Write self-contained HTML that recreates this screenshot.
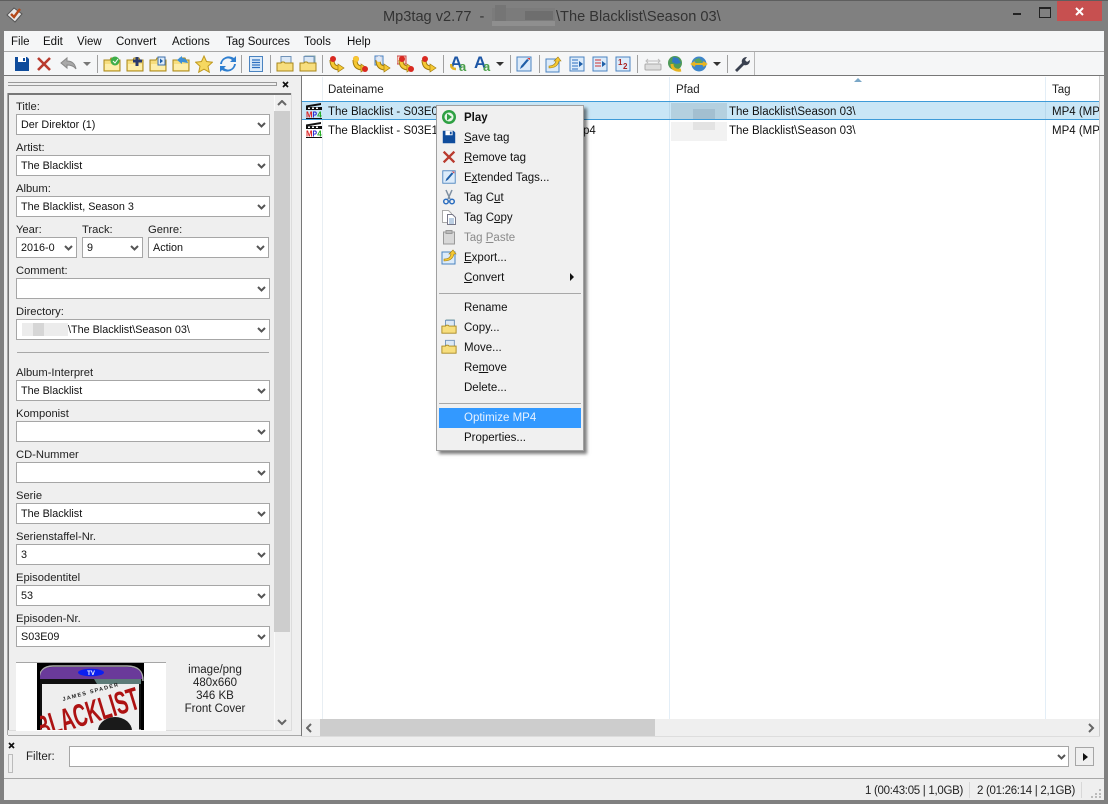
<!DOCTYPE html>
<html><head><meta charset="utf-8"><style>
html,body{margin:0;padding:0;width:1108px;height:804px;overflow:hidden;background:#808080}
body{position:relative;font:11.5px/16px "Liberation Sans",sans-serif;color:#111}
div,span.a,svg.a{position:absolute}
.t{white-space:nowrap}
.m{top:34px;white-space:nowrap;color:#111}
.l{left:16px;white-space:nowrap;color:#222;margin-top:1px;font-size:11.200px}
.c{box-sizing:border-box;background:#fff;border:1px solid #a6a6a6;height:21px;white-space:nowrap;padding:2px 0 0 4px;font-size:10.800px}
.c svg{position:absolute;right:3px;top:7px}
.s{width:1px;height:18px;top:55px;background:#a0a0a0}
.i{top:55px;width:18px;height:18px}
.mi{left:464px;white-space:nowrap;color:#111}
.mic{left:441px;width:16px;height:16px}
u{text-underline-offset:1px}
.b{background:#b9b9b9}
</style></head><body>
<svg width="0" height="0" style="position:absolute"><defs>
<symbol id="ch" viewBox="0 0 9 6"><path d="M1 1l3.500 3.500L8 1" fill="none" stroke="#555" stroke-width="2"/></symbol>
<symbol id="save" viewBox="0 0 18 18"><path d="M2 2h12l2 2v12H2z" fill="#0f4c9c"/><rect x="5" y="2" width="8" height="5" fill="#fff"/><rect x="10" y="3" width="2" height="3" fill="#0f4c9c"/></symbol>
<symbol id="x" viewBox="0 0 18 18"><path d="M3 3l12 12M15 3L3 15" stroke="#b93a2e" stroke-width="2.600" fill="none"/></symbol>
<symbol id="fold" viewBox="0 0 18 18"><path d="M1 5h6l1-2h5l1 2h3v11H1z" fill="#f7de7e" stroke="#a8871a"/><rect x="2" y="9" width="14" height="6" fill="#fdeeaa"/></symbol>
<symbol id="fold2" viewBox="0 0 18 18"><rect x="5" y="1.500" width="10" height="9" fill="#dbe8f6" stroke="#6f92b8"/><path d="M1 8h4l1-1h2l1 1h8v8H1z" fill="#f7de7e" stroke="#a8871a"/></symbol>
<symbol id="arr" viewBox="0 0 18 18"><path d="M4 5c0 6 3 8 8 8" fill="none" stroke="#a07c10" stroke-width="5"/><path d="M4 5c0 6 3 8 8 8" fill="none" stroke="#f6c933" stroke-width="3"/><path d="M10 9l6 4-6 4z" fill="#f6c933" stroke="#a07c10" stroke-width=".7"/><circle cx="5" cy="4" r="3" fill="#d92a22"/></symbol>
<symbol id="doc" viewBox="0 0 18 18"><rect x="2" y="2" width="14" height="14" fill="#dcebfa" stroke="#4a83c0"/><path d="M5 14l1-3 6-7 2 1-6 7z" fill="#1f5fa8"/><path d="M12 3l3 0 0 2z" fill="#d33"/></symbol>
<symbol id="lst" viewBox="0 0 18 18"><rect x="2" y="2" width="14" height="14" fill="#dcebfa" stroke="#4a83c0"/><path d="M4 5h6M4 8h6M4 11h6M4 14h6" stroke="#2d6fc0"/><path d="M11 6l4 3-4 3z" fill="#1f5fa8"/></symbol>
<symbol id="film" viewBox="0 0 16 16"><path d="M0 2.500L15 0v2L0 4.500z" fill="#111"/><path d="M0 4h16v3H0zM0 15h16v1H0z" fill="#111"/><path d="M2 4.500h2v1.500H2zM6 4.500h2v1.500H6zM10 4.500h2v1.500h-2z" fill="#fff"/><text x="0" y="14.400" font-size="8.500" font-weight="bold" fill="#d22" font-family="Liberation Sans" textLength="6.500" lengthAdjust="spacingAndGlyphs">M</text><text x="6.500" y="14.400" font-size="8.500" font-weight="bold" fill="#22c" font-family="Liberation Sans" textLength="4.500" lengthAdjust="spacingAndGlyphs">P</text><text x="11.200" y="14.400" font-size="8.500" font-weight="bold" fill="#2a2" font-family="Liberation Sans" textLength="4.500" lengthAdjust="spacingAndGlyphs">4</text></symbol>
</defs></svg>

<!-- title bar -->
<div style="left:0;top:0;width:1108px;height:1px;background:#5e5e5e"></div>
<svg class="a" style="left:6px;top:6px" width="18" height="18" viewBox="0 0 18 18"><path d="M1 9l7-7 8 6-7 8z" fill="#e8e8e8" stroke="#555"/><path d="M5 8l3 3 6-8" fill="none" stroke="#b5491a" stroke-width="2.400"/></svg>
<div class="t" style="left:383px;top:8px;font-size:14.600px;line-height:18px;color:#333">Mp3tag v2.77&nbsp; -&nbsp;</div>
<div style="left:492px;top:8px;width:63px;height:17px;background:#7b7b7b"></div>
<div style="left:495px;top:5px;width:11px;height:20px;background:#757575"></div>
<div style="left:525px;top:11px;width:28px;height:9px;background:#6e6e6e"></div>
<div style="left:492px;top:21px;width:63px;height:5px;background:#8f8f8f"></div>
<div class="t" style="left:556px;top:8px;font-size:14.600px;line-height:18px;color:#333">\The Blacklist\Season 03\</div>
<div style="left:1013px;top:13px;width:8px;height:2px;background:#222"></div>
<div style="left:1039px;top:7px;width:10px;height:8px;border:1px solid #222;border-top-width:2px"></div>
<div style="left:1057px;top:1px;width:45px;height:20px;background:#c75050"></div>
<svg class="a" style="left:1075px;top:7px" width="9" height="9"><path d="M1 1l7 7M8 1l-7 7" stroke="#fff" stroke-width="2"/></svg>

<!-- client -->
<div style="left:4px;top:31px;width:1100px;height:769px;background:#efefef"></div>
<div style="left:4px;top:31px;width:1100px;height:20px;background:#f5f6f7"></div>
<div style="left:4px;top:51px;width:1100px;height:1px;background:#a8a8a8"></div>
<div style="left:4px;top:52px;width:1100px;height:23px;background:#f5f6f7"></div>
<div style="left:4px;top:75px;width:1100px;height:1px;background:#777"></div>
<div class="m" style="left:11px">File</div><div class="m" style="left:43px">Edit</div><div class="m" style="left:77px">View</div><div class="m" style="left:116px">Convert</div><div class="m" style="left:172px">Actions</div><div class="m" style="left:226px">Tag Sources</div><div class="m" style="left:304px">Tools</div><div class="m" style="left:347px">Help</div>

<!-- toolbar -->
<svg class="a i" style="left:13px"><use href="#save"/></svg>
<svg class="a i" style="left:35px"><use href="#x"/></svg>
<svg class="a" style="left:60px;top:55px" width="18" height="18" viewBox="0 0 18 18"><path d="M1 8l6-5v3c5 0 8 3 9 8-2-3-5-4-9-4v3z" fill="#a9a9a9" stroke="#888"/></svg>
<svg class="a" style="left:83px;top:62px" width="8" height="4"><path d="M0 0h8l-4 4z" fill="#777"/></svg>
<div class="s" style="left:97px"></div>
<svg class="a i" style="left:103px"><use href="#fold"/><circle cx="12" cy="6" r="4.500" fill="#3fae49"/><path d="M10 6l2 2 3-4" stroke="#fff" fill="none"/></svg>
<svg class="a i" style="left:126px"><use href="#fold"/><path d="M11 2v9M7 6h9" stroke="#2b3a6b" stroke-width="3"/></svg>
<svg class="a i" style="left:149px"><use href="#fold"/><rect x="9" y="2" width="7" height="8" fill="#dcebfa" stroke="#3c6eaa"/><path d="M11 3.500l3 2.500-3 2.500z" fill="#1f5fa8"/></svg>
<svg class="a i" style="left:172px"><use href="#fold"/><path d="M5 5l5-4v2c3 0 5 2 6 5l-6-1v2z" fill="#3b8fd8"/></svg>
<svg class="a i" style="left:195px"><path d="M9 1l2.500 5.500 6 .7-4.500 4 1.300 6L9 14.200 3.700 17.200 5 11.200.500 7.200l6-.7z" fill="#f6d860" stroke="#c09a20"/></svg>
<svg class="a i" style="left:219px"><path d="M3 9a6 6 0 0 1 10-4l-2 2h6V1l-2 2A9 9 0 0 0 1 9z" fill="#2f7fd0"/><path d="M15 9a6 6 0 0 1-10 4l2-2H1v6l2-2A9 9 0 0 0 17 9z" fill="#2f7fd0"/></svg>
<div class="s" style="left:241px"></div>
<svg class="a i" style="left:247px"><rect x="2.500" y="1.500" width="13" height="15" fill="#dcebfa" stroke="#4a83c0"/><path d="M5 5h8M5 7.500h8M5 10h8M5 12.500h8" stroke="#2d6fc0" stroke-width="1.300"/></svg>
<div class="s" style="left:270px"></div>
<svg class="a i" style="left:276px"><use href="#fold2"/></svg>
<svg class="a i" style="left:299px"><rect x="6" y="1" width="10" height="9" fill="#dbe8f6" stroke="#8aa"/><use href="#fold2"/></svg>
<div class="s" style="left:322px"></div>
<svg class="a i" style="left:328px"><use href="#arr"/></svg>
<svg class="a i" style="left:351px"><use href="#arr"/><circle cx="5" cy="4" r="3" fill="#f6c933"/><circle cx="14" cy="14" r="3" fill="#d92a22"/></svg>
<svg class="a i" style="left:374px"><rect x="1" y="1" width="8" height="9" fill="#dcebfa" stroke="#4a83c0"/><use href="#arr"/><circle cx="5" cy="4" r="3" fill="#dcebfa"/></svg>
<svg class="a i" style="left:397px"><rect x="0" y="1" width="9" height="8" fill="#f8d8c8" stroke="#c44"/><use href="#arr"/><circle cx="14" cy="14" r="3" fill="#d92a22"/></svg>
<svg class="a i" style="left:420px"><use href="#arr"/></svg>
<div class="s" style="left:443px"></div>
<div class="t" style="left:450px;top:53px;font-size:17px;line-height:20px;font-weight:bold;color:#1d56a5">A</div><div class="t" style="left:459px;top:59px;font-size:13px;line-height:15px;font-weight:bold;color:#4aa04a">a</div>
<svg class="a" style="left:450px;top:63px" width="10" height="10"><path d="M1 1c0 4 2 5 5 5" stroke="#e6b422" stroke-width="2.500" fill="none"/></svg>
<div class="t" style="left:474px;top:53px;font-size:17px;line-height:20px;font-weight:bold;color:#1d56a5">A</div><div class="t" style="left:483px;top:59px;font-size:13px;line-height:15px;font-weight:bold;color:#4aa04a">a</div>
<svg class="a" style="left:496px;top:62px" width="8" height="4"><path d="M0 0h8l-4 4z" fill="#333"/></svg>
<div class="s" style="left:510px"></div>
<svg class="a i" style="left:515px"><use href="#doc"/></svg>
<div class="s" style="left:539px"></div>
<svg class="a i" style="left:544px"><rect x="2" y="4" width="13" height="13" fill="#dcebfa" stroke="#4a83c0"/><path d="M5 11c3 0 6-1 7-5l-2 0 4-4 3 4-2 0c-1 5-5 7-10 7z" fill="#f6c933" stroke="#a07c10" stroke-width=".6"/></svg>
<svg class="a i" style="left:568px"><use href="#lst"/></svg>
<svg class="a i" style="left:591px"><rect x="2" y="2" width="14" height="14" fill="#dcebfa" stroke="#4a83c0"/><path d="M4 5h6M4 8h6M4 11h6" stroke="#c33"/><path d="M11 6l4 3-4 3z" fill="#1f5fa8"/></svg>
<svg class="a i" style="left:614px"><rect x="2" y="2" width="14" height="14" fill="#dcebfa" stroke="#4a83c0"/><text x="4" y="10" font-size="8" font-weight="bold" fill="#a22" font-family="Liberation Sans">1</text><text x="9" y="14" font-size="8" font-weight="bold" fill="#a22" font-family="Liberation Sans">2</text></svg>
<div class="s" style="left:637px"></div>
<svg class="a i" style="left:644px"><rect x="1" y="9" width="16" height="6" rx="1" fill="#ddd" stroke="#aaa"/><path d="M3 6h12M4 4l-2 2 2 2M14 4l2 2-2 2" stroke="#bbb" fill="none"/></svg>
<svg class="a i" style="left:667px"><circle cx="8" cy="8" r="7" fill="#4f9a58"/><path d="M6 2l5 1 3 5-5 1-4-2z" fill="#2f77c4"/><path d="M5 9c0 5 4 7 9 6" stroke="#e6b422" stroke-width="3" fill="none"/></svg>
<svg class="a i" style="left:690px"><circle cx="9" cy="9" r="7.500" fill="#3f86c9"/><path d="M4 5l5-2 4 4-5 2z" fill="#5aa55f"/><path d="M3 9h12M5 7l-3 2 3 2M13 7l3 2-3 2" stroke="#e6b422" stroke-width="2" fill="none"/></svg>
<svg class="a" style="left:713px;top:62px" width="8" height="4"><path d="M0 0h8l-4 4z" fill="#333"/></svg>
<div class="s" style="left:727px"></div>
<svg class="a i" style="left:733px"><path d="M2 15l7-7c-1-3 1-6 5-6l-2 3 2 2 3-2c0 4-3 6-6 5l-7 7z" fill="#3a4150"/></svg>
<div class="s" style="left:754px;top:52px;height:23px;background:#b8b8b8"></div>

<!-- left panel -->
<div style="left:8px;top:82px;width:269px;height:1px;background:#999"></div>
<div style="left:8px;top:85px;width:269px;height:1px;background:#999"></div>
<div style="left:276px;top:82px;width:1px;height:4px;background:#999"></div>
<svg class="a" style="left:282px;top:81px" width="7" height="7"><path d="M1 1l5 5M6 1L1 6" stroke="#111" stroke-width="1.700"/></svg>
<div style="left:8px;top:93px;width:283px;height:2px;background:#777"></div>
<div style="left:8px;top:93px;width:1px;height:638px;background:#777"></div>
<div style="left:291px;top:93px;width:1px;height:638px;background:#dcdcdc"></div>
<div style="left:8px;top:730px;width:284px;height:1px;background:#dcdcdc"></div>
<div style="left:8px;top:735px;width:293px;height:1px;background:#a8a8a8"></div>
<div style="left:7px;top:93px;width:1px;height:642px;background:#a8a8a8"></div>
<div style="left:274px;top:95px;width:1px;height:635px;background:#fafafa"></div>
<div style="left:274px;top:111px;width:16px;height:521px;background:#cdcdcd"></div>
<svg class="a" style="left:277px;top:100px" width="10" height="7"><path d="M1 5l4-4 4 4" fill="none" stroke="#666" stroke-width="2"/></svg>
<svg class="a" style="left:277px;top:719px" width="10" height="7"><path d="M1 1l4 4 4-4" fill="none" stroke="#666" stroke-width="2"/></svg>

<div class="l" style="top:98px">Title:</div>
<div class="c" style="left:16px;top:114px;width:254px">Der Direktor (1)<svg width="9" height="6"><use href="#ch"/></svg></div>
<div class="l" style="top:139px">Artist:</div>
<div class="c" style="left:16px;top:155px;width:254px">The Blacklist<svg width="9" height="6"><use href="#ch"/></svg></div>
<div class="l" style="top:180px">Album:</div>
<div class="c" style="left:16px;top:196px;width:254px">The Blacklist, Season 3<svg width="9" height="6"><use href="#ch"/></svg></div>
<div class="l" style="top:221px">Year:</div><div class="l" style="left:82px;top:221px">Track:</div><div class="l" style="left:148px;top:221px">Genre:</div>
<div class="c" style="left:16px;top:237px;width:61px">2016-0<svg width="9" height="6"><use href="#ch"/></svg></div>
<div class="c" style="left:82px;top:237px;width:61px">9<svg width="9" height="6"><use href="#ch"/></svg></div>
<div class="c" style="left:148px;top:237px;width:121px">Action<svg width="9" height="6"><use href="#ch"/></svg></div>
<div class="l" style="top:262px">Comment:</div>
<div class="c" style="left:16px;top:278px;width:254px"><svg width="9" height="6"><use href="#ch"/></svg></div>
<div class="l" style="top:303px">Directory:</div>
<div class="c" style="left:16px;top:319px;width:254px"><svg width="9" height="6"><use href="#ch"/></svg></div>
<div style="left:22px;top:323px;width:46px;height:13px;background:#ececec"></div>
<div style="left:33px;top:323px;width:11px;height:13px;background:#d6d6d6"></div>
<div class="t" style="left:68px;top:322px;font-size:10.800px">\The Blacklist\Season 03\</div>
<div style="left:17px;top:352px;width:252px;height:1px;background:#a8a8a8"></div>
<div class="l" style="top:364px">Album-Interpret</div>
<div class="c" style="left:16px;top:380px;width:254px">The Blacklist<svg width="9" height="6"><use href="#ch"/></svg></div>
<div class="l" style="top:405px">Komponist</div>
<div class="c" style="left:16px;top:421px;width:254px"><svg width="9" height="6"><use href="#ch"/></svg></div>
<div class="l" style="top:446px">CD-Nummer</div>
<div class="c" style="left:16px;top:462px;width:254px"><svg width="9" height="6"><use href="#ch"/></svg></div>
<div class="l" style="top:487px">Serie</div>
<div class="c" style="left:16px;top:503px;width:254px">The Blacklist<svg width="9" height="6"><use href="#ch"/></svg></div>
<div class="l" style="top:528px">Serienstaffel-Nr.</div>
<div class="c" style="left:16px;top:544px;width:254px">3<svg width="9" height="6"><use href="#ch"/></svg></div>
<div class="l" style="top:569px">Episodentitel</div>
<div class="c" style="left:16px;top:585px;width:254px">53<svg width="9" height="6"><use href="#ch"/></svg></div>
<div class="l" style="top:610px">Episoden-Nr.</div>
<div class="c" style="left:16px;top:626px;width:254px">S03E09<svg width="9" height="6"><use href="#ch"/></svg></div>

<!-- cover -->
<div style="left:16px;top:662px;width:150px;height:68px;background:#fff;border-top:1px solid #a6a6a6"></div>
<svg class="a" style="left:37px;top:663px" width="107" height="67" viewBox="0 0 107 67">
<rect width="107" height="67" fill="#000"/>
<path d="M2 67V18Q2 3 16 3H90Q106 3 106 18V67z" fill="#111" stroke="#aaa" stroke-width="1.500"/>
<path d="M3 15Q3 4 16 4H90Q105 4 105 15V16H3z" fill="#6a3a9a"/>
<ellipse cx="54" cy="9.500" rx="13" ry="3.800" fill="#0b1ff0"/>
<text x="54" y="12" font-size="6" fill="#fff" text-anchor="middle" font-family="Liberation Sans" font-weight="bold">TV</text>
<path d="M57 16h47v5H60z" fill="#5d7b78"/>
<rect x="5" y="21" width="97" height="46" fill="#eeeeee"/>
<text x="26" y="38" font-size="5.500" letter-spacing="1.300" fill="#222" font-family="Liberation Sans" font-weight="bold" transform="rotate(-15 26 38)">JAMES SPADER</text>
<text x="3" y="76" font-size="32" fill="#ad1212" font-family="Liberation Sans" font-weight="bold" textLength="106" lengthAdjust="spacingAndGlyphs" transform="rotate(-17 3 76)">BLACKLIST</text>
<ellipse cx="78" cy="68" rx="17" ry="14" fill="#1a1a1a"/>
<rect x="0" y="0" width="3" height="67" fill="#000"/>
<rect x="104" y="18" width="3" height="49" fill="#000"/>
</svg>
<div style="left:165px;top:664px;width:100px;text-align:center;line-height:13px;color:#222">image/png<br>480x660<br>346 KB<br>Front Cover</div>

<!-- list -->
<div style="left:301px;top:76px;width:799px;height:660px;background:#fff"></div>
<div style="left:301px;top:76px;width:1px;height:661px;background:#777"></div>
<div style="left:1099px;top:76px;width:1px;height:661px;background:#ccc"></div>
<div style="left:322px;top:77px;width:1px;height:642px;background:#e8eef3"></div>
<div style="left:669px;top:77px;width:1px;height:642px;background:#e3eef7"></div>
<div style="left:1045px;top:77px;width:1px;height:642px;background:#e3eef7"></div>
<div class="t" style="left:328px;top:82px;color:#222">Dateiname</div>
<div class="t" style="left:676px;top:82px;color:#222">Pfad</div>
<div class="t" style="left:1052px;top:82px;color:#222">Tag</div>
<svg class="a" style="left:854px;top:78px" width="8" height="4"><path d="M0 4l4-4 4 4z" fill="#7aa7c7"/></svg>
<div style="left:302px;top:101px;width:797px;height:19px;box-sizing:border-box;background:#c9e6f6;border-top:1px solid #3e9bd8;border-bottom:1px solid #3e9bd8"></div>
<div style="left:669px;top:102px;width:1px;height:17px;background:#b7d8ec"></div>
<div style="left:1045px;top:102px;width:1px;height:17px;background:#b7d8ec"></div>
<svg class="a" style="left:306px;top:103px" width="16" height="16"><use href="#film"/></svg>
<svg class="a" style="left:306px;top:122px" width="16" height="16"><use href="#film"/></svg>
<div class="t" style="left:328px;top:104px">The Blacklist - S03E09</div>
<div class="t" style="left:328px;top:123px">The Blacklist - S03E10</div>
<div class="t" style="left:583px;top:123px">p4</div>
<div style="left:671px;top:103px;width:56px;height:16px;background:#b4d0df"></div>
<div style="left:693px;top:109px;width:22px;height:10px;background:#a3bfd0"></div>
<div style="left:671px;top:122px;width:56px;height:19px;background:#f2f2f2"></div>
<div style="left:693px;top:122px;width:22px;height:8px;background:#e3e3e3"></div>
<div class="t" style="left:729px;top:104px">The Blacklist\Season 03\</div>
<div class="t" style="left:729px;top:123px">The Blacklist\Season 03\</div>
<div class="t" style="left:1052px;top:104px;width:47px;overflow:hidden">MP4 (MP42)</div>
<div class="t" style="left:1052px;top:123px;width:47px;overflow:hidden">MP4 (MP42)</div>

<div style="left:302px;top:719px;width:797px;height:17px;background:#efefef"></div>
<div style="left:320px;top:719px;width:335px;height:17px;background:#cdcdcd"></div>
<svg class="a" style="left:306px;top:723px" width="7" height="10"><path d="M5 1L1 5l4 4" fill="none" stroke="#666" stroke-width="2"/></svg>
<svg class="a" style="left:1088px;top:723px" width="7" height="10"><path d="M1 1l4 4-4 4" fill="none" stroke="#666" stroke-width="2"/></svg>
<div style="left:301px;top:736px;width:799px;height:1px;background:#ddd"></div>

<!-- context menu -->
<div style="left:436px;top:105px;box-sizing:border-box;width:148px;height:346px;background:#f0f0f0;border:1px solid #a0a0a0;box-shadow:3px 3px 3px rgba(0,0,0,.5)"></div>
<svg class="a mic" style="top:109px"><circle cx="8" cy="8" r="7" fill="#2ea043"/><circle cx="8" cy="8" r="4.500" fill="#e8f5e8"/><path d="M6 4.500l5 3.500-5 3.500z" fill="#2ea043"/></svg>
<svg class="a mic" style="top:129px" viewBox="0 0 18 18"><use href="#save"/></svg>
<svg class="a mic" style="top:149px" viewBox="0 0 18 18"><use href="#x"/></svg>
<svg class="a mic" style="top:169px" viewBox="0 0 18 18"><use href="#doc"/></svg>
<svg class="a mic" style="top:189px"><path d="M5 1l4 9M11 1l-4 9" stroke="#7d8ea0" stroke-width="1.500"/><circle cx="5" cy="12.500" r="2.300" fill="none" stroke="#2d6fc0" stroke-width="1.500"/><circle cx="11" cy="12.500" r="2.300" fill="none" stroke="#2d6fc0" stroke-width="1.500"/></svg>
<svg class="a mic" style="top:209px"><path d="M1.500 1.500h6l3 3v9h-9z" fill="#fff" stroke="#aaa"/><path d="M6.500 5.500h5l3 3v7h-8z" fill="#fff" stroke="#778"/><path d="M8 10h5M8 12h5M8 14h5" stroke="#7a9fc7"/></svg>
<svg class="a mic" style="top:229px"><rect x="2.500" y="3" width="11" height="12" fill="#d8d8d8" stroke="#999"/><rect x="5" y="1.500" width="6" height="3" fill="#bbb" stroke="#999"/></svg>
<svg class="a mic" style="top:249px"><rect x="1" y="3" width="13" height="12" fill="#dcebfa" stroke="#4a83c0"/><path d="M3 10c4 0 6-1 7-5l-2 0 4-4 3 4-2 0c-1 5-5 7-10 7z" fill="#f6c933" stroke="#a07c10" stroke-width=".6"/></svg>
<svg class="a mic" style="top:319px" viewBox="0 0 18 18"><rect x="6" y="1" width="9" height="9" fill="#dbe8f6" stroke="#8aa"/><use href="#fold2"/></svg>
<svg class="a mic" style="top:339px" viewBox="0 0 18 18"><use href="#fold2"/></svg>

<div class="mi" style="top:110px;font-weight:bold">Play</div>
<div class="mi" style="top:130px"><u>S</u>ave tag</div>
<div class="mi" style="top:150px"><u>R</u>emove tag</div>
<div class="mi" style="top:170px">E<u>x</u>tended Tags...</div>
<div class="mi" style="top:190px">Tag C<u>u</u>t</div>
<div class="mi" style="top:210px">Tag C<u>o</u>py</div>
<div class="mi" style="top:230px;color:#8a8a8a">Tag <u>P</u>aste</div>
<div class="mi" style="top:250px"><u>E</u>xport...</div>
<div class="mi" style="top:270px"><u>C</u>onvert</div>
<svg class="a" style="left:570px;top:273px" width="4" height="8"><path d="M0 0l4 4-4 4z" fill="#111"/></svg>
<div style="left:439px;top:293px;width:142px;height:1px;background:#a8a8a8"></div>
<div class="mi" style="top:300px">Rename</div>
<div class="mi" style="top:320px">Copy...</div>
<div class="mi" style="top:340px">Move...</div>
<div class="mi" style="top:360px">Re<u>m</u>ove</div>
<div class="mi" style="top:380px">Delete...</div>
<div style="left:439px;top:403px;width:142px;height:1px;background:#a8a8a8"></div>
<div style="left:439px;top:408px;width:142px;height:20px;background:#3399ff"></div>
<div class="mi" style="top:410px;color:#e8f2ff">Optimize MP4</div>
<div class="mi" style="top:430px">Properties...</div>

<!-- filter -->
<svg class="a" style="left:8px;top:742px" width="7" height="7"><path d="M1 1l5 5M6 1L1 6" stroke="#111" stroke-width="1.700"/></svg>
<div style="left:8px;top:754px;width:5px;height:19px;border:1px solid #bbb;box-sizing:border-box"></div>
<div class="t" style="left:26px;top:749px;color:#222">Filter:</div>
<div style="left:69px;top:746px;box-sizing:border-box;width:1000px;height:21px;background:#fff;border:1px solid #a6a6a6"></div>
<svg class="a" style="left:1057px;top:754px" width="9" height="6"><use href="#ch"/></svg>
<div style="left:1075px;top:747px;box-sizing:border-box;width:19px;height:19px;background:#efefef;border:1px solid #a6a6a6"></div>
<svg class="a" style="left:1083px;top:753px" width="5" height="8"><path d="M0 0l5 4-5 4z" fill="#111"/></svg>
<div style="left:4px;top:778px;width:1100px;height:1px;background:#a8a8a8"></div>

<!-- status -->
<div class="t" style="left:865px;top:783px;color:#222;letter-spacing:-.3px">1 (00:43:05 | 1,0GB)</div>
<div style="left:969px;top:782px;width:1px;height:16px;background:#d8d8d8"></div>
<div class="t" style="left:977px;top:783px;color:#222;letter-spacing:-.3px">2 (01:26:14 | 2,1GB)</div>
<div style="left:1081px;top:782px;width:1px;height:16px;background:#d8d8d8"></div>
<svg class="a" style="left:1091px;top:788px" width="11" height="10"><path d="M8 1h2v2H8zM4 5h2v2H4zM8 5h2v2H8zM0 8h2v2H0zM4 8h2v2H4zM8 8h2v2H8z" fill="#bbb"/></svg>
</body></html>
